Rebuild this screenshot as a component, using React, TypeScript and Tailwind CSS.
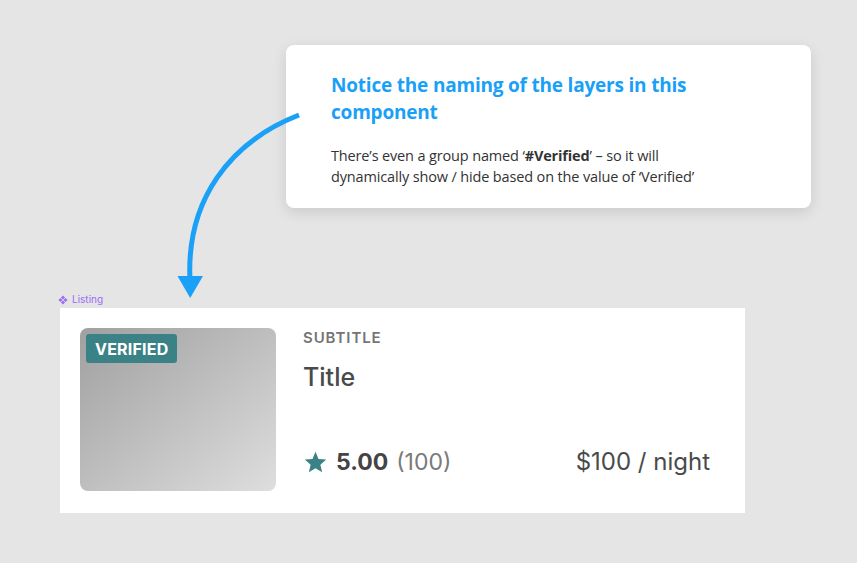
import React from 'react';

const ComponentIcon = () => (
  <svg width="10" height="10" viewBox="0 0 10 10" className="shrink-0">
    <path d="M5 0.5 L7 2.5 L5 4.5 L3 2.5 Z M5 5.5 L7 7.5 L5 9.5 L3 7.5 Z M2.5 3 L4.5 5 L2.5 7 L0.5 5 Z M7.5 3 L9.5 5 L7.5 7 L5.5 5 Z" fill="#9a6cf5" />
  </svg>
);

const Star = () => (
  <svg width="25" height="24" viewBox="0 0 24 24" className="shrink-0">
    <path d="M12 1.8 L15 8.9 L22.7 9.6 L16.9 14.7 L18.6 22.2 L12 18.2 L5.4 22.2 L7.1 14.7 L1.3 9.6 L9 8.9 Z" fill="#3b8286" />
  </svg>
);

// arrow sits over the callout card, so it's drawn last
const Arrow = () => (
  <svg className="absolute left-0 top-0 z-10 pointer-events-none" width="857" height="563" viewBox="0 0 857 563">
    <path d="M299 115 C 230 142, 186 200, 190 280" fill="none" stroke="#1aa0f7" strokeWidth="5" />
    <path d="M177.5 276 L203 276 L190.2 298 Z" fill="#1aa0f7" />
  </svg>
);

export default function App() {
  return (
    <div className="relative w-[857px] h-[563px] overflow-hidden bg-[#e5e5e5]">
      <div className="relative ml-[286px] pt-[45px]">
        <div className="w-[525px] h-[163px] rounded-lg bg-white shadow-[0_4px_14px_rgba(0,0,0,0.12)] pl-[45px] pr-[90px] pt-[27px] font-['Open_Sans',sans-serif]">
          <h2 className="text-[19px] font-bold leading-[27px] text-[#1aa0f7] tracking-[-0.2px]">
            Notice the naming of the layers in this component
          </h2>
          <p className="mt-[19px] text-[14.5px] leading-[21px] text-[#333] tracking-[-0.15px]">
            There’s even a group named ‘<span className="font-bold">#Verified</span>’ – so it will dynamically show / hide based on the value of ‘Verified’
          </p>
        </div>
      </div>

      <div className="relative ml-[58px] mt-[84px] flex items-center gap-1 h-[15px] text-[10px] text-[#9a6cf5] font-['Inter',sans-serif]">
        <ComponentIcon />
        <span>Listing</span>
      </div>

      <div className="relative ml-[60px] mt-[1px] w-[685px] h-[205px] bg-white flex p-5 pr-[35px] gap-[27px] font-['Inter',sans-serif]">
        <div className="relative w-[196px] h-[163px] rounded-lg bg-gradient-to-br from-[#a0a0a0] to-[#dedede] shrink-0">
          <div className="absolute left-[6px] top-[6px] h-[29px] px-[9px] rounded-[3px] bg-[#3b8286] flex items-center text-white text-[16px] font-bold tracking-[0.2px]">
            VERIFIED
          </div>
        </div>
        <div className="flex-1 flex flex-col">
          <div className="mt-[1px] text-[15px] font-semibold leading-[18px] tracking-[0.9px] text-[#757575]">SUBTITLE</div>
          <div className="mt-[15px] text-[25px] font-medium leading-[30px] text-[#4a4a4a]">Title</div>
          <div className="mt-auto mb-[13px] flex items-center justify-between">
            <div className="flex items-center gap-[8px]">
              <Star />
              <span className="text-[23px] font-bold text-[#444]">5.00</span>
              <span className="text-[23px] text-[#7a7a7a]">(100)</span>
            </div>
            <span className="text-[24px] text-[#4a4a4a]">$100 / night</span>
          </div>
        </div>
      </div>

      <Arrow />
    </div>
  );
}
